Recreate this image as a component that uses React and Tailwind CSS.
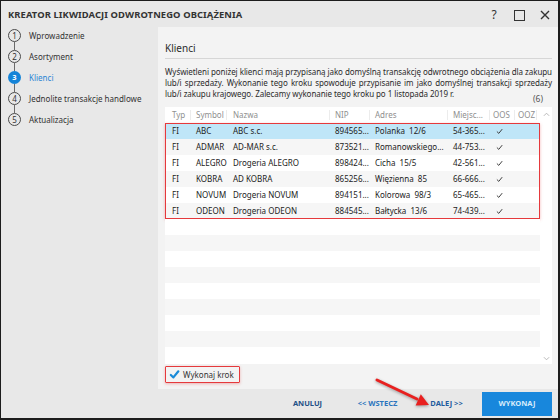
import React from 'react';

const steps = [
  { n: 1, label: 'Wprowadzenie' },
  { n: 2, label: 'Asortyment' },
  { n: 3, label: 'Klienci', active: true },
  { n: 4, label: 'Jednolite transakcje handlowe' },
  { n: 5, label: 'Aktualizacja' },
];

const rows = [
  ['FI', 'ABC', 'ABC s.c.', '894565...', 'Polanka  12/6', '54-365...'],
  ['FI', 'ADMAR', 'AD-MAR s.c.', '873521...', 'Romanowskiego...', '44-753...'],
  ['FI', 'ALEGRO', 'Drogeria ALEGRO', '898424...', 'Cicha  15/5', '42-561...'],
  ['FI', 'KOBRA', 'AD KOBRA', '865256...', 'Więzienna  85', '66-666...'],
  ['FI', 'NOVUM', 'Drogeria NOVUM', '894151...', 'Kolorowa  98/3', '65-465...'],
  ['FI', 'ODEON', 'Drogeria ODEON', '884545...', 'Bałtycka  13/6', '74-439...'],
];

// column widths, starting at the left edge of the list
const cols = [
  { w: 'w-[26px] pl-[7px]', name: 'Typ' },
  { w: 'w-[36px] pl-[5px]', name: 'Symbol' },
  { w: 'w-[103px] pl-[6px]', name: 'Nazwa' },
  { w: 'w-[40px] pl-[5px]', name: 'NIP' },
  { w: 'w-[78px] pl-[5px]', name: 'Adres' },
  { w: 'w-[42px] pl-[5px]', name: 'Miejsc...' },
  { w: 'w-[25px] pl-[3px]', name: 'OOS' },
  { w: 'w-[22px] pl-[3px]', name: 'OOZ' },
];

const Check = ({ className, width = 2.2 }) => (
  <svg viewBox="0 0 12 12" className={className}>
    <path d="M2 6.5 L4.8 9.2 L10.2 2.5" fill="none" stroke="currentColor" strokeWidth={width} strokeLinecap="round" strokeLinejoin="round" />
  </svg>
);

const App = () => {
  return (
    <div
      className="w-[560px] h-[420px] bg-[#e8e8e8] border-l border-t border-r-2 border-b-2 border-[#1c1c1c] flex flex-col relative text-[#2b2b2b] overflow-hidden"
      style={{ fontFamily: '"Noto Sans", "Open Sans", sans-serif' }}
    >
      {/* title bar */}
      <div className="h-[26px] flex items-center pl-[7px] pt-[2px]">
        <div className="text-[9.4px] font-bold tracking-[0.1px] text-[#333]">KREATOR LIKWIDACJI ODWROTNEGO OBCIĄŻENIA</div>
        <div className="ml-auto flex items-center text-[#333]">
          <span className="w-[14px] text-center text-[12px] leading-none">?</span>
          <span className="w-[11px] h-[11px] border-[1.5px] border-[#333] ml-[13px]"></span>
          <svg viewBox="0 0 10 10" className="w-[10px] h-[10px] ml-[15px] mr-[8px]">
            <path d="M1 1 L9 9 M9 1 L1 9" stroke="#333" strokeWidth="1.4" />
          </svg>
        </div>
      </div>

      <div className="flex-1 flex min-h-0">
        {/* steps */}
        <div className="w-[157px] pl-[7px] pt-[2px] flex flex-col">
          {steps.map((s, i) => (
            <div key={s.n} className="flex flex-col">
              <div className="flex items-center h-[13px]">
                <div
                  className={
                    s.active
                      ? 'w-[13px] h-[13px] rounded-full bg-[#1584d8] text-white text-[7.5px] font-bold flex items-center justify-center'
                      : 'w-[13px] h-[13px] rounded-full border border-[#4a4a4a] text-[8px] flex items-center justify-center text-[#333]'
                  }
                >
                  {s.n}
                </div>
                <span className={s.active ? 'ml-[8px] text-[8px] text-[#2a86d4]' : 'ml-[8px] text-[8px] text-[#333]'}>{s.label}</span>
              </div>
              {i < steps.length - 1 && <div className="w-px h-[8px] bg-[#6a6a6a] ml-[6px]"></div>}
            </div>
          ))}
        </div>

        {/* content panel */}
        <div className="w-[400px] bg-[#f3f3f3] pl-[7px] pr-[6px] flex flex-col">
          <div className="pt-[14px] pb-[3px] border-b border-[#d6d6d6]">
            <div className="text-[10px] leading-[14px] text-[#2b2b2b]">Klienci</div>
          </div>
          <div className="mt-[7px] text-[8px] leading-[11px] tracking-[-0.07px] text-[#2b2b2b]">
            <div className="whitespace-nowrap [text-align-last:justify]">Wyświetleni poniżej klienci mają przypisaną jako domyślną transakcję odwrotnego obciążenia dla zakupu</div>
            <div className="whitespace-nowrap [text-align-last:justify]">lub/i sprzedaży. Wykonanie tego kroku spowoduje przypisanie im jako domyślnej transakcji sprzedaży</div>
            <div className="whitespace-nowrap">lub/i zakupu krajowego. Zalecamy wykonanie tego kroku po 1 listopada 2019 r.</div>
          </div>
          <div className="-mt-[6px] h-[12px] leading-[12px] text-[8.5px] text-[#555] text-right pr-[9px]">(6)</div>

          {/* list */}
          <div className="mt-[2px] h-[257px] bg-white flex">
            <div className="w-[375px] flex flex-col text-[8px]">
              <div className="h-[16px] flex items-center text-[#8f8f8f]">
                {cols.map((c) => (
                  <div key={c.name} className={`${c.w} h-[10px] leading-[10px] border-r border-[#ececec] whitespace-nowrap overflow-hidden`}>{c.name}</div>
                ))}
              </div>
              <div className="outline-[1.5px] outline-[#e5393c] -outline-offset-1 shadow-[0_1px_3px_rgba(229,57,60,0.35)]">
                {rows.map((r, i) => (
                  <div
                    key={r[1]}
                    className={
                      i === 0
                        ? 'h-[16px] flex items-center bg-[#bfe6f8] text-[#222]'
                        : i % 2 === 1
                        ? 'h-[16px] flex items-center bg-[#f6f6f6] text-[#222]'
                        : 'h-[16px] flex items-center bg-white text-[#222]'
                    }
                  >
                    {r.map((v, j) => (
                      <div key={j} className={`${cols[j].w} whitespace-pre overflow-hidden`}>{v}</div>
                    ))}
                    <div className={`${cols[6].w} pl-[6px]`}>
                      <Check className="w-[7px] h-[7px] text-[#333]" width={1.6} />
                    </div>
                  </div>
                ))}
              </div>
              {Array.from({ length: 9 }).map((_, i) => (
                <div key={i} className={i % 2 === 1 ? 'h-[16px] bg-[#f6f6f6]' : 'h-[16px] bg-white'}></div>
              ))}
            </div>
            <div className="w-[12px] flex flex-col items-center justify-between pt-[5px] pb-[3px]">
              <svg viewBox="0 0 8 5" className="w-[7px] h-[5px]">
                <path d="M1 4 L4 1 L7 4" fill="none" stroke="#b0b0b0" strokeWidth="1" />
              </svg>
              <svg viewBox="0 0 8 5" className="w-[7px] h-[5px] ml-[1px]">
                <path d="M1 1 L4 4 L7 1" fill="none" stroke="#b0b0b0" strokeWidth="1" />
              </svg>
            </div>
          </div>

          {/* checkbox */}
          <div className="mt-[2px] h-[17px] w-[75px] flex items-center outline-[1.5px] outline-[#e5393c] -outline-offset-1 rounded-[1px] shadow-[0_1px_3px_rgba(229,57,60,0.35)]">
            <Check className="w-[11px] h-[11px] ml-[4px] text-[#1a8ad8]" width={2.4} />
            <span className="ml-[3px] text-[8px] whitespace-nowrap text-[#333]">Wykonaj krok</span>
          </div>
        </div>
      </div>

      {/* footer */}
      <div className="h-[29px] flex items-center justify-end pr-[6px] text-[7.5px] font-bold">
        <button className="w-[55px] text-center text-[#1f4f86] mr-[8px]">ANULUJ</button>
        <button className="w-[69px] text-center text-[#2a74bd] mr-[1px]">&lt;&lt; WSTECZ</button>
        <button className="w-[67px] text-center text-[#1f5c9e] mr-[2px]">DALEJ &gt;&gt;</button>
        <button className="w-[70px] h-[24px] bg-[#1887dc] text-[#d6ebfb] text-center">WYKONAJ</button>
      </div>

      {/* red annotation arrow */}
      <svg className="absolute left-0 top-0 w-[560px] h-[420px] pointer-events-none" viewBox="0 0 560 420">
        <g style={{ filter: 'drop-shadow(0 1px 1.5px rgba(0,0,0,0.35))' }}>
          <line x1="376" y1="379" x2="416" y2="398" stroke="#e8201f" strokeWidth="3" strokeLinecap="round" />
          <polygon points="428,404 414.6,404.4 419.8,393.2" fill="#e8201f" />
        </g>
      </svg>
    </div>
  );
};

export default App;
